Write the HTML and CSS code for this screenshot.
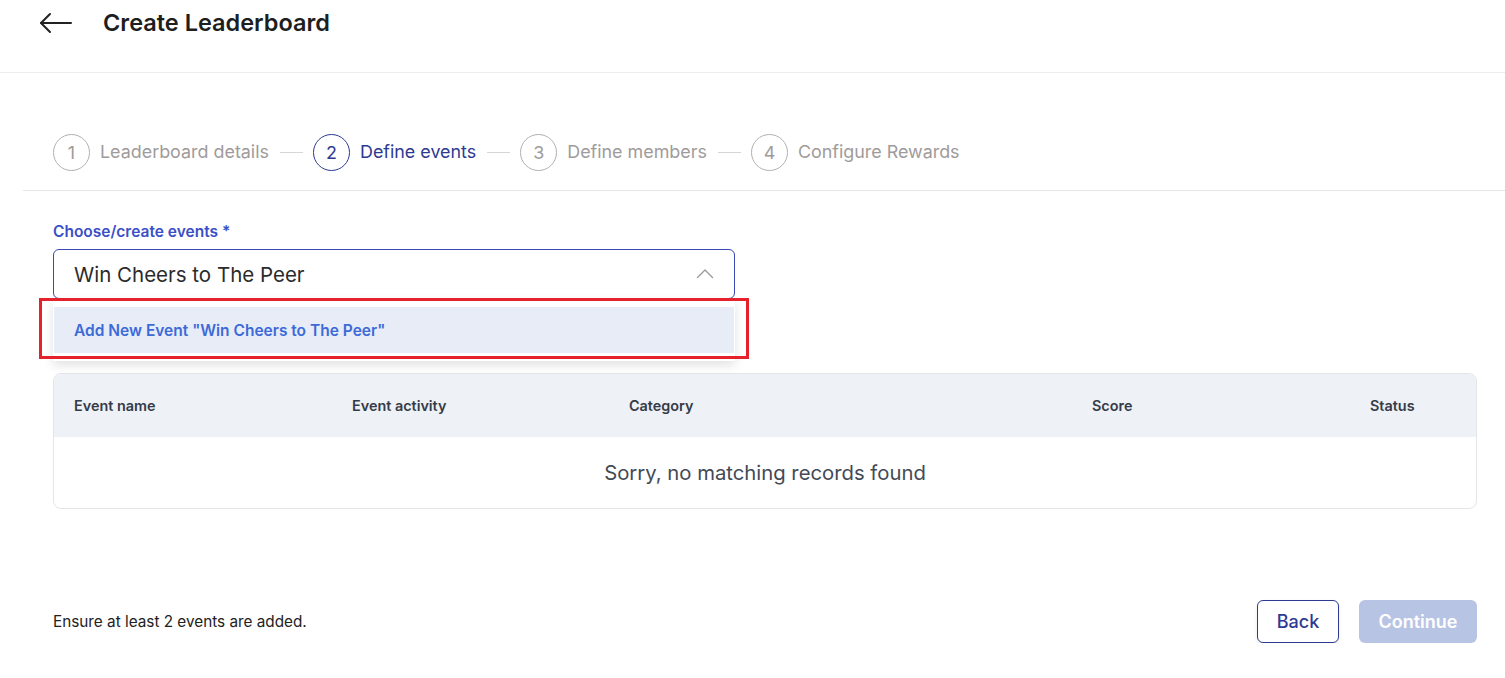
FILE: index.html
```html
<!DOCTYPE html>
<html lang="en">
<head>
<meta charset="utf-8">
<title>Create Leaderboard</title>
<link rel="stylesheet" href="styles.css">
</head>
<body>
<header class="topbar">
  <span class="back-arrow" aria-label="Back">
    <svg width="34" height="22" viewBox="0 0 34 22" fill="none" stroke="#222" stroke-width="2" stroke-linecap="round" stroke-linejoin="round">
      <path d="M32 11H2"/>
      <path d="M11 2L2 11L11 20"/>
    </svg>
  </span>
  <h1 class="title">Create Leaderboard</h1>
</header>

<nav class="stepper-wrap">
  <div class="stepper">
    <div class="step"><span class="circle">1</span><span class="step-label">Leaderboard details</span></div>
    <span class="connector"></span>
    <div class="step active"><span class="circle">2</span><span class="step-label">Define events</span></div>
    <span class="connector"></span>
    <div class="step"><span class="circle">3</span><span class="step-label">Define members</span></div>
    <span class="connector"></span>
    <div class="step"><span class="circle">4</span><span class="step-label">Configure Rewards</span></div>
  </div>
</nav>

<main class="content">
  <label class="field-label">Choose/create events *</label>
  <div class="field-wrap">
    <div class="select">
      <span class="select-value">Win Cheers to The Peer</span>
      <svg class="chevron" width="18" height="11" viewBox="0 0 18 11" fill="none" stroke="#9a9a9a" stroke-width="1.4" stroke-linecap="round" stroke-linejoin="round">
        <path d="M1.5 9.5L9 2L16.5 9.5"/>
      </svg>
    </div>
    <div class="menu">
      <div class="option">Add New Event "Win Cheers to The Peer"</div>
    </div>
    <div class="highlight"></div>
  </div>

  <div class="table">
    <div class="thead">
      <div>Event name</div>
      <div>Event activity</div>
      <div>Category</div>
      <div>Score</div>
      <div>Status</div>
    </div>
    <div class="tbody">Sorry, no matching records found</div>
  </div>

  <footer class="footer">
    <p class="hint">Ensure at least 2 events are added.</p>
    <div class="actions">
      <button class="btn btn-back">Back</button>
      <button class="btn btn-continue" disabled>Continue</button>
    </div>
  </footer>
</main>
</body>
</html>
```

FILE: styles.css
```css
* { box-sizing: border-box; }

body {
  margin: 0;
  background: #ffffff;
  font-family: "Inter", "Liberation Sans", sans-serif;
  color: #222;
}

.topbar {
  height: 73px;
  border-bottom: 1px solid #ededed;
  display: flex;
  align-items: flex-start;
  padding: 9px 0 0 39px;
}

.back-arrow {
  display: flex;
  align-items: center;
  height: 28px;
  width: 64px;
}

.title {
  margin: 0;
  font-size: 23.5px;
  line-height: 28px;
  font-weight: 600;
  color: #1e1e1e;
}

.stepper-wrap {
  margin-left: 23px;
  padding: 60px 0 19px 30px;
  border-bottom: 1px solid #e6e6e6;
}

.stepper {
  display: flex;
  align-items: center;
  height: 38px;
}

.step {
  display: flex;
  align-items: center;
  gap: 10px;
  color: #a09b9b;
}

.circle {
  width: 37px;
  height: 37px;
  border-radius: 50%;
  border: 1px solid #b3b0b0;
  display: flex;
  align-items: center;
  justify-content: center;
  font-size: 17.9px;
  color: #a09b9b;
}

.step-label {
  font-size: 17.9px;
  line-height: 22px;
}

.step.active .circle {
  border-color: #2d3a92;
  color: #2d3a92;
}

.step.active .step-label {
  color: #2d3a92;
}

.connector {
  width: 23px;
  height: 1px;
  background: #d6d6d6;
  margin: 0 10px 0 11px;
}

.content {
  padding: 31px 28px 0 53px;
}

.field-label {
  display: block;
  font-weight: 600;
  font-size: 15.5px;
  line-height: 19px;
  color: #3a4fc7;
  margin-bottom: 8px;
}

.field-wrap {
  position: relative;
  width: 682px;
}

.select {
  height: 50px;
  border: 1px solid #3949b8;
  border-radius: 6px;
  display: flex;
  align-items: center;
  justify-content: space-between;
  padding: 0 20px 0 20px;
}

.select-value {
  font-size: 20.5px;
  color: #2b2b2b;
}

.chevron { margin-top: -2px; }

.menu {
  position: absolute;
  top: 50px;
  left: 0;
  width: 682px;
  background: #fff;
  padding: 8px 1px;
  box-shadow: 0 4px 10px rgba(0, 0, 0, 0.12);
  z-index: 2;
}

.option {
  height: 46px;
  background: #e7ecf7;
  display: flex;
  align-items: center;
  padding-left: 20px;
  font-weight: 600;
  font-size: 15.5px;
  color: #3c6ad8;
}

.highlight {
  position: absolute;
  top: 49px;
  left: -14px;
  width: 710px;
  height: 61px;
  border: 3px solid #e5222b;
  z-index: 3;
  pointer-events: none;
}

.table {
  margin-top: 74px;
  border: 1px solid #e3e5e8;
  border-radius: 8px;
  overflow: hidden;
}

.thead {
  display: grid;
  grid-template-columns: 278px 277px 463px 278px 1fr;
  height: 63px;
  align-items: center;
  background: #eef1f5;
  padding-left: 20px;
  font-size: 14.4px;
  font-weight: 600;
  color: #353b48;
}

.tbody {
  height: 71px;
  display: flex;
  align-items: center;
  justify-content: center;
  font-size: 20.3px;
  color: #444a55;
}

.footer {
  margin-top: 91px;
  display: flex;
  align-items: center;
  justify-content: space-between;
}

.hint {
  margin: 0;
  font-size: 15.3px;
  color: #222;
}

.actions {
  display: flex;
  gap: 20px;
}

.btn {
  height: 43px;
  border-radius: 6px;
  font-family: "Inter", "Liberation Sans", sans-serif;
  font-size: 18px;
  padding: 0;
}

.btn-back {
  width: 82px;
  background: #fff;
  border: 1px solid #2d3a92;
  color: #2d3a92;
  font-weight: 500;
  box-shadow: 0 2px 4px rgba(0, 0, 0, 0.08);
}

.btn-continue {
  width: 118px;
  background: #b8c4e4;
  border: none;
  color: #ffffff;
  font-weight: 600;
}
```
